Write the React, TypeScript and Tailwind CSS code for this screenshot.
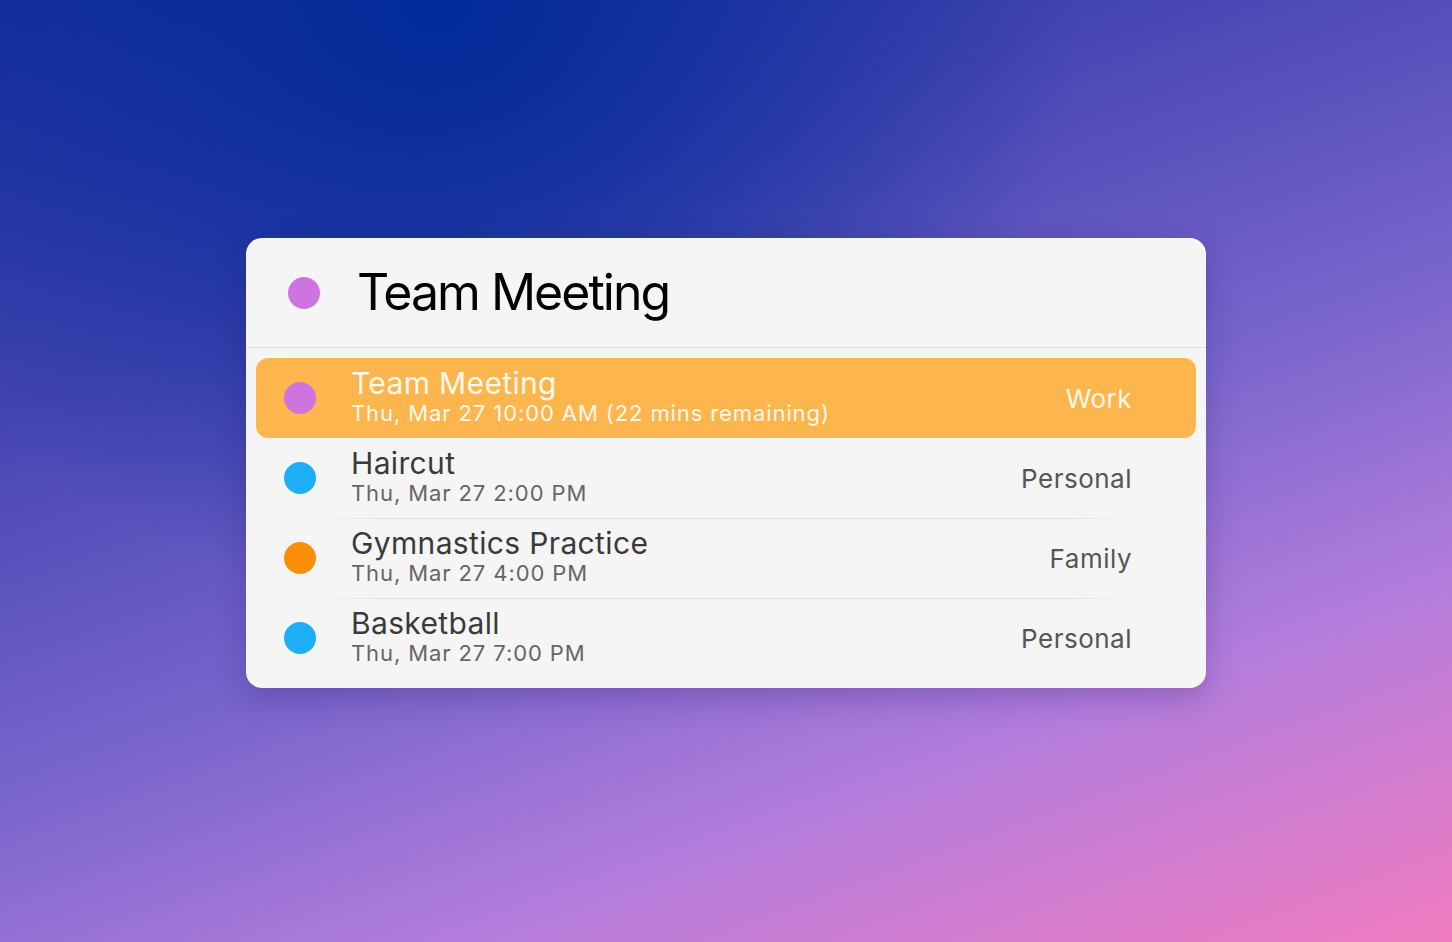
import React from "react";

type Item = { title: string; sub: string; tag: string; color: string; selected?: boolean };

const items: Item[] = [
  { title: "Team Meeting", sub: "Thu, Mar 27 10:00 AM (22 mins remaining)", tag: "Work", color: "bg-[#cd74de]", selected: true },
  { title: "Haircut", sub: "Thu, Mar 27 2:00 PM", tag: "Personal", color: "bg-[#1eaef5]" },
  { title: "Gymnastics Practice", sub: "Thu, Mar 27 4:00 PM", tag: "Family", color: "bg-[#fb8f0a]" },
  { title: "Basketball", sub: "Thu, Mar 27 7:00 PM", tag: "Personal", color: "bg-[#1eaef5]" },
];

function Row({ item, showSep }: { item: Item; showSep: boolean }) {
  const sel = item.selected;
  return (
    <div className="relative">
      {showSep && (
        <div className="absolute top-0 left-[50px] right-[50px] h-px bg-[linear-gradient(90deg,rgba(0,0,0,0)_0%,#e0e0e0_10%,#e0e0e0_90%,rgba(0,0,0,0)_100%)]" />
      )}
      <div
        className={
          sel
            ? "flex items-center h-[80px] rounded-[12px] bg-[#fcb64d] pl-[28px] pr-[64px]"
            : "flex items-center h-[80px] rounded-[12px] pl-[28px] pr-[64px]"
        }
      >
        <div className={`w-[32px] h-[32px] rounded-full shrink-0 ${item.color}`} />
        <div className="flex flex-col ml-[35px] flex-1 min-w-0">
          <div
            className={
              sel
                ? "text-[30px] leading-[30px] text-[#fff8ec] tracking-[0.35px]"
                : "text-[30px] leading-[30px] text-[#3a3a3a] tracking-[0.35px]"
            }
          >
            {item.title}
          </div>
          <div
            className={
              sel
                ? "text-[22px] leading-[30px] text-[#fff8ec] tracking-[0.9px]"
                : "text-[22px] leading-[30px] text-[#666666] tracking-[0.9px]"
            }
          >
            {item.sub}
          </div>
        </div>
        <div
          className={
            sel ? "text-[26px] text-[#fff8ec] tracking-[0.5px]" : "text-[26px] text-[#555555] tracking-[0.5px]"
          }
        >
          {item.tag}
        </div>
      </div>
    </div>
  );
}

export default function App() {
  return (
    <div
      className="w-[1452px] h-[942px] flex items-start justify-center pt-[238px] bg-[radial-gradient(ellipse_at_30%_0%,#002a98_0%,rgba(0,42,152,0)_45%),linear-gradient(160deg,#1a2f9c_0%,#4545b2_28%,#7a66cc_55%,#b27ddc_75%,#f07cc0_100%)]"
      style={{ fontFamily: "Inter, 'Noto Sans', sans-serif" }}
    >
      <div className="w-[960px] rounded-[16px] bg-[#f5f5f5] shadow-[0_10px_30px_rgba(40,20,100,0.25)] overflow-hidden">
        <div className="flex items-center h-[109px] pl-[42px]">
          <div className="w-[32px] h-[32px] rounded-full bg-[#cd74de] shrink-0" />
          <div className="ml-[37px] text-[50px] leading-none text-black tracking-[-2px] pb-[2px]">Team Meeting</div>
        </div>
        <div className="h-px bg-[#e0e0e0]" />
        <div className="p-[10px]">
          {items.map((it, i) => (
            <Row key={i} item={it} showSep={i >= 2} />
          ))}
        </div>
      </div>
    </div>
  );
}
